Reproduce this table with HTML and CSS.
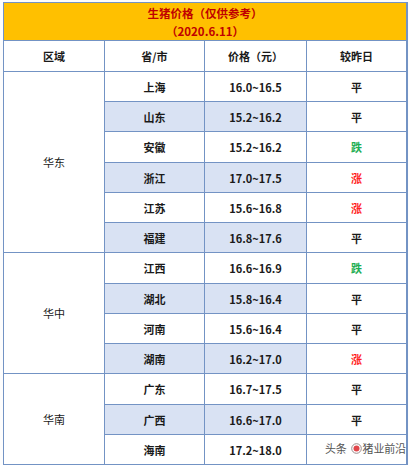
FILE: index.html
```html
<!DOCTYPE html>
<html lang="zh">
<head>
<meta charset="utf-8">
<link rel="stylesheet" href="styles.css">
</head>
<body>
<div class="sheet">
  <div class="cell title"><span>生猪价格（仅供参考）</span><span>（2020.6.11）</span></div>
  <div class="cell head">区域</div>
  <div class="cell head">省/市</div>
  <div class="cell head">价格（元）</div>
  <div class="cell head">较昨日</div>

  <div class="cell region r-east">华东</div>
  <div class="cell b">上海</div><div class="cell b">16.0~16.5</div><div class="cell b">平</div>
  <div class="cell b sh">山东</div><div class="cell b sh">15.2~16.2</div><div class="cell b">平</div>
  <div class="cell b">安徽</div><div class="cell b">15.2~16.2</div><div class="cell b down">跌</div>
  <div class="cell b sh">浙江</div><div class="cell b sh">17.0~17.5</div><div class="cell b up">涨</div>
  <div class="cell b">江苏</div><div class="cell b">15.6~16.8</div><div class="cell b up">涨</div>
  <div class="cell b sh">福建</div><div class="cell b sh">16.8~17.6</div><div class="cell b">平</div>

  <div class="cell region r-mid">华中</div>
  <div class="cell b">江西</div><div class="cell b">16.6~16.9</div><div class="cell b down">跌</div>
  <div class="cell b sh">湖北</div><div class="cell b sh">15.8~16.4</div><div class="cell b">平</div>
  <div class="cell b">河南</div><div class="cell b">15.6~16.4</div><div class="cell b">平</div>
  <div class="cell b sh">湖南</div><div class="cell b sh">16.2~17.0</div><div class="cell b up">涨</div>

  <div class="cell region r-south">华南</div>
  <div class="cell b">广东</div><div class="cell b">16.7~17.5</div><div class="cell b">平</div>
  <div class="cell b sh">广西</div><div class="cell b sh">16.6~17.0</div><div class="cell b">平</div>
  <div class="cell b">海南</div><div class="cell b">17.2~18.0</div><div class="cell b"></div>

  <div class="cell"></div><div class="cell"></div><div class="cell"></div><div class="cell"></div>
</div>
<div class="mark">头条 <span class="at"><svg width="11" height="11" viewBox="0 0 11 11"><circle cx="5.5" cy="5.5" r="4.8" fill="none" stroke="#9a8a8a" stroke-width="1"/><circle cx="5.5" cy="5.5" r="3" fill="#e0454a"/></svg></span>猪业前沿</div>
</body>
</html>
```
FILE: styles.css
```css
html, body {
  margin: 0;
  padding: 0;
  background: #fdfdfd;
  overflow: hidden;
  height: 465px;
}
body {
  font-family: "Noto Sans CJK SC", "Noto Sans", sans-serif;
  color: #1a1a1a;
  font-size: 11px;
  position: relative;
}
.sheet {
  margin: 2px 0 0 3px;
  width: 403px;
  display: grid;
  grid-template-columns: 100px 99px 101px 99px;
  grid-template-rows: 37px 30px 29px 29px 30px 29px 29px 29px 30px 29px 29px 29px 30px 29px 29px 30px;
  gap: 1px;
  background: #7393c4;
  border: 1px solid #7393c4;
}
.cell {
  background: #ffffff;
  display: flex;
  align-items: center;
  justify-content: center;
}
.title {
  grid-column: 1 / 5;
  background: #ffc000;
  color: #c00000;
  font-weight: 700;
  flex-direction: column;
  line-height: 18px;
  font-size: 11.5px;
}
.head { font-weight: 700; }
.b { font-weight: 700; }
.region { font-weight: 400; }
.r-east { grid-row: span 6; }
.r-mid { grid-row: span 4; }
.r-south { grid-row: span 3; }
.sh { background: #d9e2f3; }
.up { color: #ff1f1f; }
.down { color: #1fae54; }
.mark {
  position: absolute;
  left: 325px;
  top: 440px;
  font-size: 11px;
  color: #555;
  display: flex;
  align-items: center;
  gap: 1px;
  letter-spacing: -0.2px;
}
.at { display: inline-flex; margin-left: 3px; }
```
